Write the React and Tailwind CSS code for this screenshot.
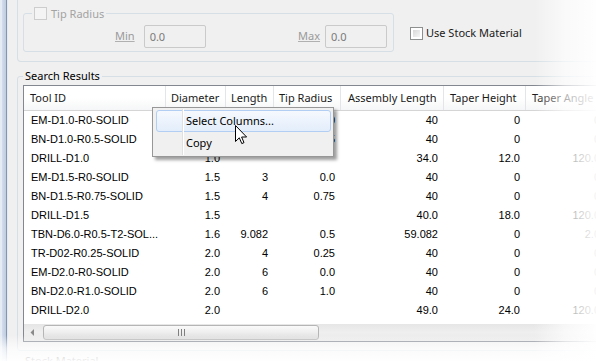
import React from "react";

const rows = [
  ["EM-D1.0-R0-SOLID", "1.0", "2", "0.0", "40", "0", "0"],
  ["BN-D1.0-R0.5-SOLID", "1.0", "2", "0.5", "40", "0", "0"],
  ["DRILL-D1.0", "1.0", "", "", "34.0", "12.0", "120.0"],
  ["EM-D1.5-R0-SOLID", "1.5", "3", "0.0", "40", "0", "0"],
  ["BN-D1.5-R0.75-SOLID", "1.5", "4", "0.75", "40", "0", "0"],
  ["DRILL-D1.5", "1.5", "", "", "40.0", "18.0", "120.0"],
  ["TBN-D6.0-R0.5-T2-SOL...", "1.6", "9.082", "0.5", "59.082", "0", "2.0"],
  ["TR-D02-R0.25-SOLID", "2.0", "4", "0.25", "40", "0", "0"],
  ["EM-D2.0-R0-SOLID", "2.0", "6", "0.0", "40", "0", "0"],
  ["BN-D2.0-R1.0-SOLID", "2.0", "6", "1.0", "40", "0", "0"],
  ["DRILL-D2.0", "2.0", "", "", "49.0", "24.0", "120.0"],
];

const headers = [
  ["Tool ID", "pl-[6px]"],
  ["Diameter", "pl-[5px]"],
  ["Length", "pl-[5px]"],
  ["Tip Radius", "pl-[5px]"],
  ["Assembly Length", "pl-[7px]"],
  ["Taper Height", "pl-[6px]"],
  ["Taper Angle", "pl-[6px]"],
];

function Frame() {
  return (
    <div className="flex h-full w-[8px] shrink-0">
      <div className="w-[2px] bg-[#e6ecf3]" />
      <div className="w-[4px] bg-linear-to-r from-[#d3dded] to-[#bfcde0]" />
      <div className="w-[1px] bg-[#8296b1]" />
      <div className="w-[1px] bg-[#e4e9ef]" />
    </div>
  );
}

function Input() {
  return (
    <div className="h-[23px] w-[62px] rounded-[2px] border border-[#cacaca] bg-[#f0f0f0] pl-[5px] leading-[21px] text-[#7a7a7a]">
      0.0
    </div>
  );
}

function Cursor() {
  return (
    <svg
      className="absolute left-[235px] top-[125px]"
      width="13"
      height="20"
      viewBox="0 0 13 20"
    >
      <path
        d="M0.5 0.5 L0.5 16.5 L4.3 12.8 L6.8 18.6 L9 17.6 L6.6 12 L11.6 12 Z"
        fill="#ffffff"
        stroke="#000000"
        strokeWidth="1"
        strokeLinejoin="miter"
      />
    </svg>
  );
}

function Menu() {
  return (
    <div className="absolute left-[152px] top-[107px] h-[50px] w-[182px] border border-[#979797] bg-[#f0f0f0] pt-[2px] shadow-[3px_3px_3px_rgba(0,0,0,0.38)]">
      <div className="ml-[3px] mr-[2px] h-[22px] rounded-[3px] border border-[#b2cff3] bg-linear-to-b from-[#f6f9fe] to-[#e3edfb] pl-[29px] leading-[20px] text-black">
        Select Columns...
      </div>
      <div className="ml-[3px] mr-[2px] h-[22px] border border-transparent pl-[29px] leading-[20px] text-black">
        Copy
      </div>
      <div className="absolute left-[29px] top-[1px] bottom-[1px] w-[1px] bg-[#e0e0e0]" />
      <div className="absolute left-[30px] top-[1px] bottom-[1px] w-[1px] bg-white" />
    </div>
  );
}

function Scrollbar() {
  return (
    <div className="flex h-[17px] items-center bg-linear-to-b from-[#e6e6e6] via-[#efefef] to-[#e9e9e9]">
      <div className="flex h-[17px] w-[17px] items-center justify-center">
        <svg width="5" height="7" viewBox="0 0 5 7">
          <path d="M4 0 L0.5 3.5 L4 7 Z" fill="#8a8a8a" />
        </svg>
      </div>
      <div className="ml-[2px] flex h-[15px] w-[276px] items-center justify-center rounded-[3px] border border-[#b5b5b5] bg-linear-to-b from-[#fafafa] via-[#eeeeee] to-[#dcdcdc]">
        <div className="flex gap-[2px]">
          <div className="h-[7px] w-[1px] bg-[#7f7f7f]" />
          <div className="h-[7px] w-[1px] bg-[#7f7f7f]" />
          <div className="h-[7px] w-[1px] bg-[#7f7f7f]" />
        </div>
      </div>
    </div>
  );
}

export default function App() {
  return (
    <div className="relative flex h-[361px] w-[596px] overflow-hidden bg-[#f0f0f0] font-['Noto_Sans',sans-serif] text-[11px] text-black">
      <Frame />
      <div className="flex w-[610px] shrink-0 flex-col pl-[9px]">
        {/* top group box (its top edge is off-screen) */}
        <div className="flex h-[62px] shrink-0 items-start rounded-b-[4px] border-x border-b border-[#d5dfe5] pl-[5px]">
          <fieldset className="mt-[6px] w-[371px] rounded-[3px] border border-[#d5dfe5] pb-[3px] pl-[8px] pr-[6px]">
            <legend className="px-[2px]">
              <span className="flex h-[15px] items-center gap-[4px] leading-[15px] text-[#a3a3a3]">
                <span className="h-[13px] w-[13px] border border-[#cdcdcd] bg-[#f4f4f4]" />
                Tip Radius
              </span>
            </legend>
            <div className="mt-[4px] flex h-[23px] items-center">
              <span className="ml-[83px] mr-[9px] text-[#9a9a9a] underline decoration-[#b0b0b0]">
                Min
              </span>
              <Input />
              <div className="ml-auto flex items-center gap-[5px]">
                <span className="text-[#9a9a9a] underline decoration-[#b0b0b0]">Max</span>
                <Input />
              </div>
            </div>
          </fieldset>
          <div className="ml-[16px] mt-[27px] flex h-[13px] items-center gap-[3px]">
            <span className="h-[13px] w-[13px] border border-[#8e8f8f] bg-white p-[2px]">
              <span className="block h-full w-full bg-linear-to-br from-[#d8d8d8] to-[#f6f6f6]" />
            </span>
            <span className="text-[#1a1a1a]">Use Stock Material</span>
          </div>
        </div>

        {/* Search Results group */}
        <fieldset className="mt-[6px] rounded-[3px] border border-[#d5dfe5] pb-[8px] pl-[5px]">
          <legend className="px-[2px] leading-[16px] text-black">Search Results</legend>
          <div className="mt-[1px] h-[257px] border border-[#828790] bg-white">
            <div className="grid h-[25px] grid-cols-[142px_60px_48px_67px_103px_82px_80px] border-b border-[#d5d5d5] bg-linear-to-b from-white from-50% to-[#f5f6f7]">
              {headers.map(([h, pad]) => (
                <div
                  key={h}
                  className={`${pad} whitespace-nowrap border-r border-[#e3e5e8] leading-[24px] text-[#1a1a1a]`}
                >
                  {h}
                </div>
              ))}
            </div>
            <div className="h-[213px] font-['Liberation_Sans',sans-serif]">
              {rows.map((r) => (
                <div
                  key={r[0]}
                  className="grid h-[19px] grid-cols-[142px_60px_48px_67px_103px_82px_80px] leading-[19px]"
                >
                  <div className="overflow-hidden whitespace-nowrap pl-[7px]">{r[0]}</div>
                  {r.slice(1).map((v, i) => (
                    <div key={i} className="whitespace-nowrap pr-[6px] text-right">
                      {v}
                    </div>
                  ))}
                </div>
              ))}
            </div>
            <Scrollbar />
          </div>
        </fieldset>
        <fieldset className="mt-[2px] h-[30px] rounded-[3px] border border-[#d5dfe5] pl-[5px]">
          <legend className="px-[2px] leading-[16px] text-black">Stock Material</legend>
        </fieldset>
      </div>

      <Menu />
      <Cursor />

      {/* edge fades */}
      <div className="pointer-events-none absolute right-0 top-0 h-full w-[62px] bg-linear-to-r from-white/0 via-white/65 to-white/95" />
      <div className="pointer-events-none absolute bottom-0 left-0 h-[26px] w-full bg-linear-to-b from-white/0 via-white/70 to-white/95" />
    </div>
  );
}
